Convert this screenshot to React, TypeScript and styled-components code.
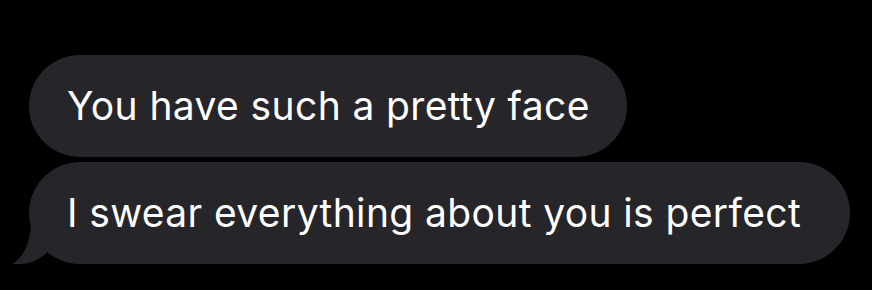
import React from "react";
import styled, { createGlobalStyle } from "styled-components";

const Global = createGlobalStyle`
  html, body { margin: 0; padding: 0; background: #000; }
  body { font-family: Inter, "Noto Sans", sans-serif; }
`;

const Thread = styled.div`
  display: flex;
  flex-direction: column;
  align-items: flex-start;
  gap: 5px;
  padding: 55px 0 0 29px;
  height: 290px;
  box-sizing: border-box;
`;

const Bubble = styled.div<{ $padRight?: number }>`
  position: relative;
  box-sizing: border-box;
  height: 102px;
  display: flex;
  align-items: center;
  padding: 0 ${(p) => p.$padRight ?? 37}px 2px 38px;
  border-radius: 51px;
  background: #262529;
  color: #fff;
  font-size: 39px;
  letter-spacing: 0.38px;
  white-space: nowrap;
`;

const Tail = styled.svg`
  position: absolute;
  left: -18px;
  bottom: -1px;
  width: 60px;
  height: 50px;
`;

export default function App() {
  return (
    <>
      <Global />
      <Thread>
        <Bubble>You have such a pretty face</Bubble>
        <Bubble $padRight={49}>
          <Tail viewBox="0 0 60 50">
            <path
              d="M20 5 C20 25 14 42 1 49 C14 50 24 47 32 41 L45 30 L40 5 Z"
              fill="#262529"
            />
          </Tail>
          I swear everything about you is perfect
        </Bubble>
      </Thread>
    </>
  );
}
